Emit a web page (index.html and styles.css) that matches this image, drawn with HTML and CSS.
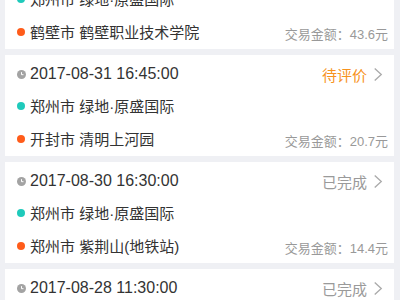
FILE: index.html
```
<!DOCTYPE html>
<html lang="zh-CN">
<head>
    <meta charset="UTF-8">
    <meta name="viewport" content="width=device-width, initial-scale=1.0">
    <title>我的行程</title>
    <link rel="stylesheet" href="styles.css">
</head>
<body>
    <div class="order-list">
        <div class="order-card">
            <div class="order-head">
                <span class="order-time"><svg class="clock" viewBox="0 0 10 10"><circle cx="5" cy="5" r="5" fill="#a3a3a3"/><path d="M5 2.4V5.2H7.2" stroke="#fff" stroke-width="1.1" fill="none"/></svg>2017-09-01 08:30:00</span>
                <span class="order-status">已完成<svg class="chevron" viewBox="0 0 10 16"><path d="M1.5 1.5L8.5 8L1.5 14.5" stroke="#aaa" stroke-width="1.4" fill="none"/></svg></span>
            </div>
            <div class="order-row"><span class="dot dot-start"></span>郑州市 绿地·原盛国际</div>
            <div class="order-row"><span class="dot dot-end"></span>鹤壁市 鹤壁职业技术学院<span class="order-amount">交易金额：43.6元</span></div>
        </div>
        <div class="order-card">
            <div class="order-head">
                <span class="order-time"><svg class="clock" viewBox="0 0 10 10"><circle cx="5" cy="5" r="5" fill="#a3a3a3"/><path d="M5 2.4V5.2H7.2" stroke="#fff" stroke-width="1.1" fill="none"/></svg>2017-08-31 16:45:00</span>
                <span class="order-status pending">待评价<svg class="chevron" viewBox="0 0 10 16"><path d="M1.5 1.5L8.5 8L1.5 14.5" stroke="#aaa" stroke-width="1.4" fill="none"/></svg></span>
            </div>
            <div class="order-row"><span class="dot dot-start"></span>郑州市 绿地·原盛国际</div>
            <div class="order-row"><span class="dot dot-end"></span>开封市 清明上河园<span class="order-amount">交易金额：20.7元</span></div>
        </div>
        <div class="order-card">
            <div class="order-head">
                <span class="order-time"><svg class="clock" viewBox="0 0 10 10"><circle cx="5" cy="5" r="5" fill="#a3a3a3"/><path d="M5 2.4V5.2H7.2" stroke="#fff" stroke-width="1.1" fill="none"/></svg>2017-08-30 16:30:00</span>
                <span class="order-status">已完成<svg class="chevron" viewBox="0 0 10 16"><path d="M1.5 1.5L8.5 8L1.5 14.5" stroke="#aaa" stroke-width="1.4" fill="none"/></svg></span>
            </div>
            <div class="order-row"><span class="dot dot-start"></span>郑州市 绿地·原盛国际</div>
            <div class="order-row"><span class="dot dot-end"></span>郑州市 紫荆山(地铁站)<span class="order-amount">交易金额：14.4元</span></div>
        </div>
        <div class="order-card">
            <div class="order-head">
                <span class="order-time"><svg class="clock" viewBox="0 0 10 10"><circle cx="5" cy="5" r="5" fill="#a3a3a3"/><path d="M5 2.4V5.2H7.2" stroke="#fff" stroke-width="1.1" fill="none"/></svg>2017-08-28 11:30:00</span>
                <span class="order-status">已完成<svg class="chevron" viewBox="0 0 10 16"><path d="M1.5 1.5L8.5 8L1.5 14.5" stroke="#aaa" stroke-width="1.4" fill="none"/></svg></span>
            </div>
            <div class="order-row"><span class="dot dot-start"></span>郑州市 绿地·原盛国际</div>
            <div class="order-row"><span class="dot dot-end"></span>郑州市 二七广场<span class="order-amount">交易金额：12.0元</span></div>
        </div>
    </div>
</body>
</html>
```

FILE: styles.css
```
body {
    margin: 0;
    background-color: #eff0f4;
    font-family: "Liberation Sans", "Noto Sans CJK SC", sans-serif;
    color: #333;
    overflow: hidden;
}
.order-list {
    display: flex;
    flex-direction: column;
    gap: 6px;
    padding: 0 6px 0 5px;
    margin-top: -52px;
}
.order-card {
    background: #fff;
    height: 101px;
    box-sizing: border-box;
    padding: 4px 6px 1px 12px;
}
.order-head {
    display: flex;
    justify-content: space-between;
    align-items: center;
    height: 30px;
}
.order-time {
    display: flex;
    align-items: center;
    font-size: 16px;
}
.clock {
    width: 9px;
    height: 9px;
    margin-right: 4px;
}
.order-status {
    display: flex;
    align-items: center;
    font-size: 15px;
    color: #9a9a9a;
    margin-right: 5px;
}
.order-status.pending {
    color: #f7931e;
}
.chevron {
    width: 10px;
    height: 15px;
    margin-left: 6px;
}
.order-row {
    display: flex;
    align-items: center;
    height: 33px;
    font-size: 15px;
}
.dot {
    width: 8px;
    height: 8px;
    border-radius: 50%;
    margin-right: 5px;
}
.dot-start {
    background: #1fcabb;
}
.dot-end {
    background: #ff5c1a;
}
.order-amount {
    margin-left: auto;
    font-size: 13px;
    color: #999;
    padding-top: 3px;
}
```
